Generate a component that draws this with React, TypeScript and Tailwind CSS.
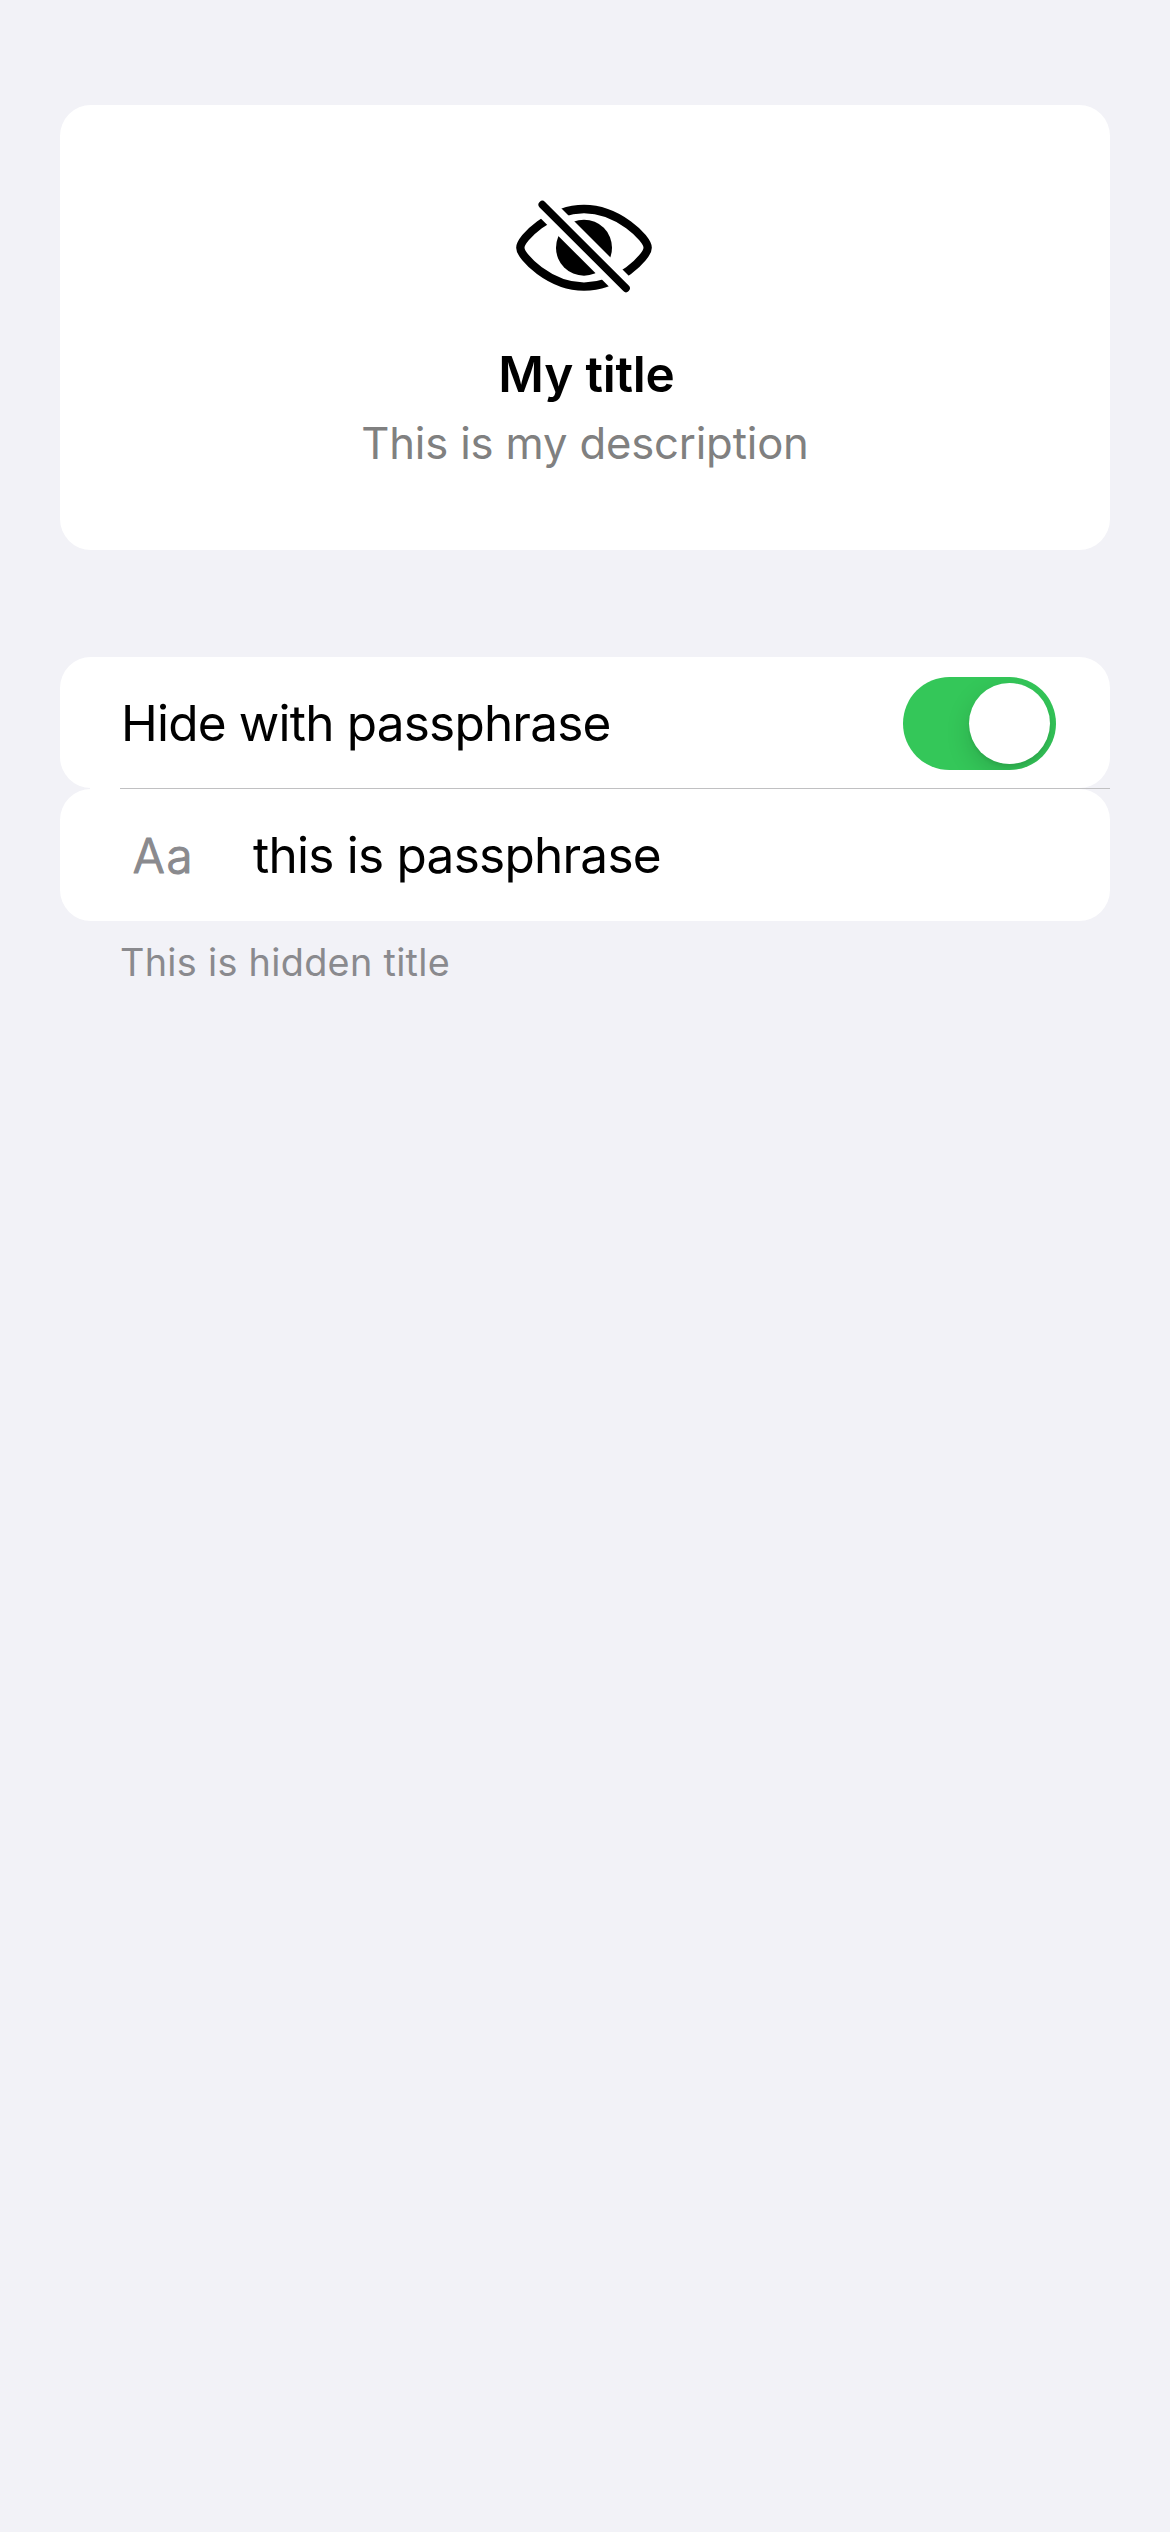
function EyeSlashIcon() {
  return (
    <svg viewBox="0 0 510 360" className="h-[120px] w-[170px]" fill="none" aria-hidden="true">
      <defs>
        <mask id="slash-gap" maskUnits="userSpaceOnUse" x="0" y="0" width="510" height="360">
          <rect width="510" height="360" fill="white" />
          <path d="M28 -40L468 400" stroke="black" strokeWidth="65" />
        </mask>
      </defs>
      <g mask="url(#slash-gap)">
        <path
          d="M61 188C61 160 150 72 252 72C354 72 443 160 443 188C443 216 354 305 252 305C150 305 61 216 61 188Z"
          stroke="black"
          strokeWidth="25"
        />
        <circle cx="252" cy="188" r="84" fill="black" />
      </g>
      <path d="M127 59L378 310" stroke="black" strokeWidth="23" strokeLinecap="round" />
    </svg>
  );
}

function Toggle() {
  return (
    <button
      role="switch"
      aria-checked="true"
      aria-label="Hide with passphrase"
      className="mt-0.5 flex h-[93px] w-[153px] items-center justify-end overflow-hidden rounded-full bg-[#34c759] pr-1.5"
    >
      <span className="size-[81px] rounded-full bg-white shadow-[0_9px_24px_rgba(0,0,0,0.15),0_3px_3px_rgba(0,0,0,0.06)]" />
    </button>
  );
}

function TextFormatIcon() {
  return (
    <svg viewBox="0 0 121 60" className="h-[60px] w-[121px]">
      <text
        x="0.8"
        y="47.5"
        className="fill-[#8a8a8e] stroke-[#8a8a8e] font-['Inter',sans-serif] text-[47.5px] font-light tracking-[1.6px]"
        strokeWidth="1.2"
        strokeLinejoin="round"
      >
        Aa
      </text>
    </svg>
  );
}

export default function App() {
  return (
    <main className="flex h-[2532px] w-[1170px] flex-col bg-[#f2f2f7] px-[60px] pt-[105px] font-['Inter',sans-serif] text-black">
      <section className="flex h-[445px] flex-col items-center rounded-[31px] bg-white pt-20">
        <EyeSlashIcon />
        <h1 className="mt-[39px] pl-[3px] text-[49.5px] leading-[60px] font-semibold tracking-[-0.2px] whitespace-nowrap">
          My title
        </h1>
        <p className="mt-[13px] text-[43.6px] leading-[54px] tracking-[-0.16px] whitespace-nowrap text-[#808080]">
          This is my description
        </p>
      </section>

      <section className="mt-[107px] flex flex-col">
        <div className="flex h-[131px] items-center justify-between rounded-[31px] bg-white pr-[54px] pl-[61px]">
          <span className="text-[49.5px] leading-[60px] tracking-[-0.8px] whitespace-nowrap">Hide with passphrase</span>
          <Toggle />
        </div>
        <div className="flex h-px">
          <div className="w-[60px] bg-gradient-to-r from-[#f2f2f7] from-50% to-white to-50%" />
          <div className="grow bg-[#c0c0c2]" />
        </div>
        <div className="flex h-[132px] items-center rounded-[31px] bg-white pl-[72px]">
          <TextFormatIcon />
          <span className="text-[49.5px] leading-[60px] tracking-[-0.75px] whitespace-nowrap">this is passphrase</span>
        </div>
        <p className="mt-[17px] pl-[60px] text-[37.8px] leading-[48px] tracking-[0.3px] whitespace-nowrap text-[#8a8a8e]">
          This is hidden title
        </p>
      </section>
    </main>
  );
}
